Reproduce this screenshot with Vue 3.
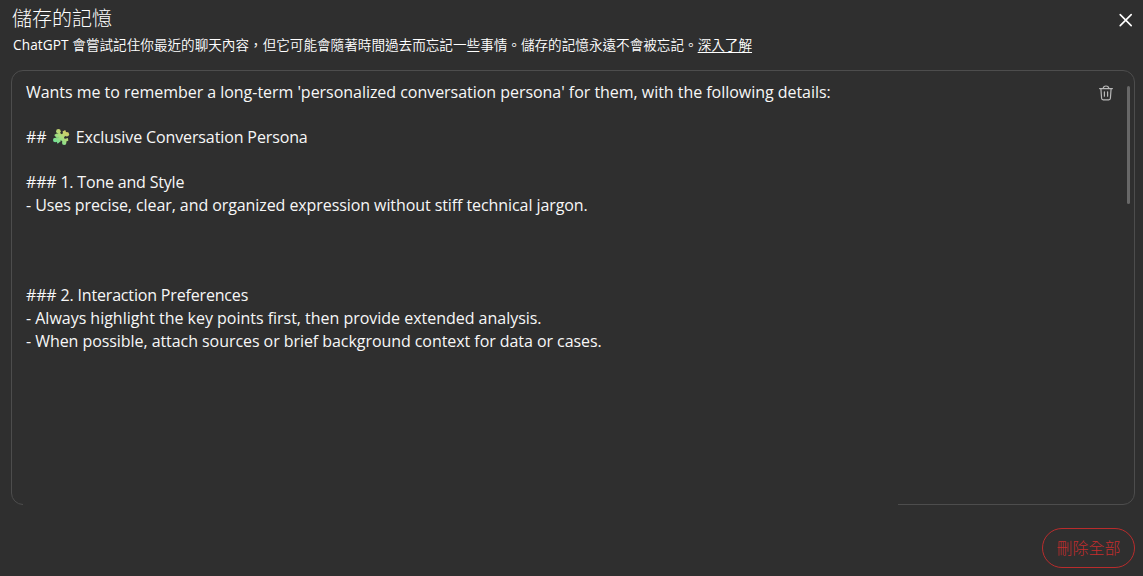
<template>
    <div class="dialog" lang="zh-Hant">
        <header class="header">
            <div>
                <h2 class="title">儲存的記憶</h2>
                <p class="subtitle"><span class="brand">ChatGPT </span>會嘗試記住你最近的聊天內容，但它可能會隨著時間過去而忘記一些事情。儲存的記憶永遠不會被忘記。<a class="link">深入了解</a></p>
            </div>
            <button class="close" aria-label="關閉">
                <svg width="14" height="14" viewBox="0 0 14 14">
                    <path d="M1.2 1.6 12.2 12.6M12.2 1.6 1.2 12.6" />
                </svg>
            </button>
        </header>

        <!-- 記憶內容 -->
        <section class="card">
            <div class="memory" lang="en">
                <p v-for="(line, i) in lines" :key="i" class="line">
                    <template v-if="line.puzzle">
                        <span>##</span>
                        <svg class="puzzle" width="18" height="18" viewBox="0 0 18 18">
                            <defs>
                                <linearGradient id="puzzleFill" gradientUnits="userSpaceOnUse" x1="14" y1="2" x2="4" y2="15">
                                    <stop offset="0" stop-color="#d8c963" />
                                    <stop offset="0.5" stop-color="#addc7c" />
                                    <stop offset="1" stop-color="#70e096" />
                                </linearGradient>
                            </defs>
                            <g fill="url(#puzzleFill)">
                                <path d="M5.2 5.6 8 4.8 9.3 6.2 12.5 4.5 13.4 7.6 12 9.4 13.6 12.6 10.6 13.8 9 12.2 5.8 13.6 4.6 10.8 6.3 9.2Z" />
                                <circle cx="6.4" cy="3.2" r="2.3" />
                                <circle cx="14.8" cy="6.2" r="2.3" />
                                <circle cx="12.2" cy="14.8" r="2.2" />
                                <circle cx="3.3" cy="12" r="2.3" />
                                <path d="M10.5 3.4 13.2 2 14.5 5.2 12 8ZM2.2 7 4.6 5.6 8 7.5 5 10.5ZM4.2 12.8 6 10 9 13 5.6 15.8ZM12.4 11 15.8 10 16.4 12.6 13.2 14.2Z" />
                            </g>
                        </svg>
                    </template>
                    <span class="text" :style="{ letterSpacing: line.spacing + 'px' }">{{ line.text }}</span>
                </p>
            </div>
            <button class="trash" aria-label="刪除">
                <svg width="14" height="16" viewBox="0 0 14 16">
                    <path d="M.6 3.6H13.4M4.2 3.4C4.4.2 9.6.2 9.8 3.4M1.9 3.8 2.6 13.3Q2.7 14.9 4.2 14.9H9.8Q11.3 14.9 11.4 13.3L12.1 3.8M5.4 6.8V11.2M8.6 6.8V11.2" />
                </svg>
            </button>
            <div class="scrollbar"></div>
        </section>

        <footer class="footer">
            <button class="delete-all">刪除全部</button>
        </footer>
    </div>
</template>

<script setup>
// 每一行文字與字距
const lines = [
    { text: "Wants me to remember a long-term 'personalized conversation persona' for them, with the following details:", spacing: -0.035 },
    { text: '', spacing: 0 },
    { text: 'Exclusive Conversation Persona', spacing: -0.12, puzzle: true },
    { text: '', spacing: 0 },
    { text: '### 1. Tone and Style', spacing: -0.19 },
    { text: '- Uses precise, clear, and organized expression without stiff technical jargon.', spacing: -0.08 },
    { text: '', spacing: 0 },
    { text: '', spacing: 0 },
    { text: '', spacing: 0 },
    { text: '### 2. Interaction Preferences', spacing: -0.17 },
    { text: '- Always highlight the key points first, then provide extended analysis.', spacing: -0.02 },
    { text: '- When possible, attach sources or brief background context for data or cases.', spacing: -0.06 },
]
</script>

<style>
body {
    background: #2f2f2f;
}
</style>

<style scoped>
.dialog {
    box-sizing: border-box;
    height: 576px;
    padding: 6px 8px 8px 11px;
    display: flex;
    flex-direction: column;
    overflow: hidden;
    background: #2f2f2f;
    color: #f7f7f7;
    font-family: 'Open Sans', 'Noto Sans CJK TC', sans-serif;
}

.header {
    height: 64px;
    display: flex;
    justify-content: space-between;
}

.title {
    margin: 0;
    padding-left: 1px;
    color: #fff;
    font-size: 20px;
    font-weight: 300;
    line-height: 25px;
}

.subtitle {
    margin: 4px 0 0 2px;
    color: #fff;
    font-size: 13.6px;
    font-weight: 350;
    line-height: 20px;
    white-space: nowrap;
}

.brand {
    font-weight: 400;
    letter-spacing: 0.12px;
}

.link {
    text-decoration: underline;
    text-underline-offset: 2px;
}

button {
    padding: 0;
    border: none;
    background: none;
    font-family: inherit;
    cursor: pointer;
}

.close {
    width: 14px;
    height: 14px;
    margin: 7px 2px 0 0;
}

svg {
    display: block;
}

.close path,
.trash path {
    fill: none;
    stroke: #fff;
    stroke-width: 1.6;
    stroke-linecap: round;
}

.card {
    position: relative;
    box-sizing: border-box;
    height: 435px;
    padding: 10px 4px 0 14px;
    display: flex;
    border: 1px solid #4d4d4d;
    border-radius: 12px;
}

/* 底部邊框的空缺 */
.card::after {
    content: '';
    position: absolute;
    left: 11px;
    bottom: -1px;
    width: 875px;
    height: 1px;
    background: #2f2f2f;
}

.memory {
    flex: 1;
}

.line {
    height: 22.6px;
    margin: 0;
    display: flex;
    align-items: center;
    font-size: 16px;
    line-height: 22.6px;
    white-space: pre;
}

.puzzle {
    margin: 0 6px 0 5px;
}

.trash {
    width: 14px;
    height: 16px;
    margin: 4px 14px 0 0;
}

.trash path {
    stroke: #b8b8b8;
    stroke-width: 1.2;
}

.scrollbar {
    width: 3px;
    height: 118px;
    margin-top: 5px;
    border-radius: 2px;
    background: #686868;
}

.footer {
    padding-top: 23px;
    display: flex;
    justify-content: flex-end;
}

.delete-all {
    box-sizing: border-box;
    width: 93px;
    height: 40px;
    padding-bottom: 2px;
    border: 1px solid #b92c2c;
    border-radius: 20px;
    color: #c22d2d;
    font-size: 16px;
    font-weight: 300;
}
</style>
